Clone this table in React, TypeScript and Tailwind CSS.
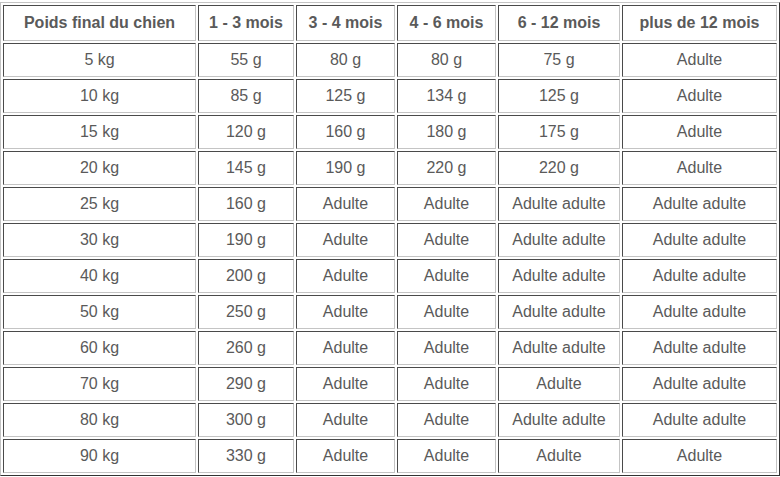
const headers = ["Poids final du chien", "1 - 3 mois", "3 - 4 mois", "4 - 6 mois", "6 - 12 mois", "plus de 12 mois"];

const rows: string[][] = [
  ["5 kg", "55 g", "80 g", "80 g", "75 g", "Adulte"],
  ["10 kg", "85 g", "125 g", "134 g", "125 g", "Adulte"],
  ["15 kg", "120 g", "160 g", "180 g", "175 g", "Adulte"],
  ["20 kg", "145 g", "190 g", "220 g", "220 g", "Adulte"],
  ["25 kg", "160 g", "Adulte", "Adulte", "Adulte adulte", "Adulte adulte"],
  ["30 kg", "190 g", "Adulte", "Adulte", "Adulte adulte", "Adulte adulte"],
  ["40 kg", "200 g", "Adulte", "Adulte", "Adulte adulte", "Adulte adulte"],
  ["50 kg", "250 g", "Adulte", "Adulte", "Adulte adulte", "Adulte adulte"],
  ["60 kg", "260 g", "Adulte", "Adulte", "Adulte adulte", "Adulte adulte"],
  ["70 kg", "290 g", "Adulte", "Adulte", "Adulte", "Adulte adulte"],
  ["80 kg", "300 g", "Adulte", "Adulte", "Adulte adulte", "Adulte adulte"],
  ["90 kg", "330 g", "Adulte", "Adulte", "Adulte", "Adulte"],
];

const cell =
  "border border-t-[#4a4a4a] border-l-[#4a4a4a] border-b-[#c4c4c4] border-r-[#c4c4c4] text-center p-0";

export default function App() {
  return (
    <div className="w-[780px] h-[477px] bg-white pt-[2px] overflow-hidden font-['Liberation_Sans',Arial,sans-serif] text-[#5a5a5a]">
      <table className="w-[780px] table-fixed border-separate border-spacing-[2px] border border-t-[#c4c4c4] border-l-[#c4c4c4] border-b-[#333] border-r-[#333]">
        <colgroup>
          <col className="w-[193px]" />
          <col className="w-[96px]" />
          <col className="w-[99px]" />
          <col className="w-[99px]" />
          <col className="w-[122px]" />
          <col />
        </colgroup>
        <thead>
          <tr className="h-[36px]">
            {headers.map((h) => (
              <th key={h} className={`${cell} text-[16px] font-bold`}>
                {h}
              </th>
            ))}
          </tr>
        </thead>
        <tbody>
          {rows.map((r) => (
            <tr key={r[0]} className="h-[34px]">
              {r.map((v, i) => (
                <td key={i} className={`${cell} text-[16px]`}>
                  {v}
                </td>
              ))}
            </tr>
          ))}
        </tbody>
      </table>
    </div>
  );
}
